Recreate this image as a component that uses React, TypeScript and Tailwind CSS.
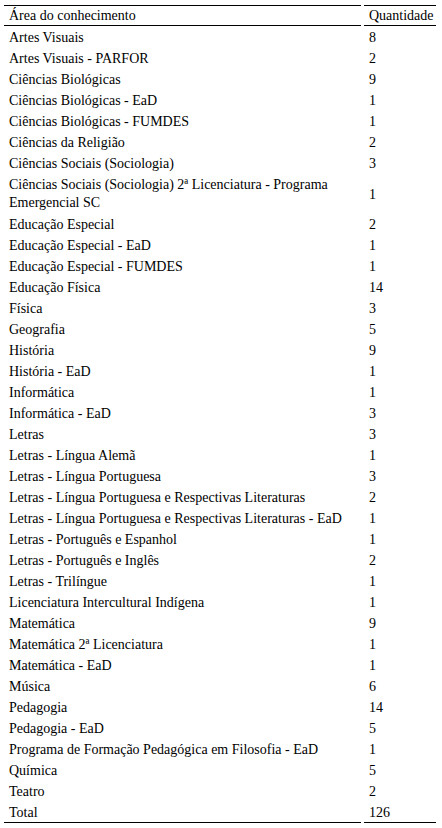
import React from "react";

const rows: [string, string][] = [
  ["Artes Visuais", "8"],
  ["Artes Visuais - PARFOR", "2"],
  ["Ciências Biológicas", "9"],
  ["Ciências Biológicas - EaD", "1"],
  ["Ciências Biológicas - FUMDES", "1"],
  ["Ciências da Religião", "2"],
  ["Ciências Sociais (Sociologia)", "3"],
  ["Ciências Sociais (Sociologia) 2ª Licenciatura - Programa\nEmergencial SC", "1"],
  ["Educação Especial", "2"],
  ["Educação Especial - EaD", "1"],
  ["Educação Especial - FUMDES", "1"],
  ["Educação Física", "14"],
  ["Física", "3"],
  ["Geografia", "5"],
  ["História", "9"],
  ["História - EaD", "1"],
  ["Informática", "1"],
  ["Informática - EaD", "3"],
  ["Letras", "3"],
  ["Letras - Língua Alemã", "1"],
  ["Letras - Língua Portuguesa", "3"],
  ["Letras - Língua Portuguesa e Respectivas Literaturas", "2"],
  ["Letras - Língua Portuguesa e Respectivas Literaturas - EaD", "1"],
  ["Letras - Português e Espanhol", "1"],
  ["Letras - Português e Inglês", "2"],
  ["Letras - Trilíngue", "1"],
  ["Licenciatura Intercultural Indígena", "1"],
  ["Matemática", "9"],
  ["Matemática 2ª Licenciatura", "1"],
  ["Matemática - EaD", "1"],
  ["Música", "6"],
  ["Pedagogia", "14"],
  ["Pedagogia - EaD", "5"],
  ["Programa de Formação Pedagógica em Filosofia - EaD", "1"],
  ["Química", "5"],
  ["Teatro", "2"],
];

export default function App() {
  return (
    <div className="bg-white min-h-[828px] pt-[5px] pl-[4px] text-[14px] leading-[18px] text-black font-['Liberation_Serif','Times_New_Roman',serif]">
      <div className="grid grid-cols-[357px_72px] gap-x-[3px]">
        {/* header */}
        <div className="border-t border-b border-black pl-[5px] pt-px h-[21px]">Área do conhecimento</div>
        <div className="border-t border-b border-black pl-[5px] pt-px h-[21px]">Quantidade</div>

        {rows.map(([area, qty]) => (
          <React.Fragment key={area}>
            <div className="pl-[5px] pt-[3px] pb-0 whitespace-pre-line [&:has(br)]:pb-px">
              {area.includes("\n") ? (
                <div className="pb-px">{area}</div>
              ) : (
                area
              )}
            </div>
            <div className="pl-[5px] pt-[3px] pb-0 flex items-center">{qty}</div>
          </React.Fragment>
        ))}

        {/* total */}
        <div className="pl-[5px] pt-[3px] pb-0 border-b border-black">Total</div>
        <div className="pl-[5px] pt-[3px] pb-0 border-b border-black">126</div>
      </div>
    </div>
  );
}
